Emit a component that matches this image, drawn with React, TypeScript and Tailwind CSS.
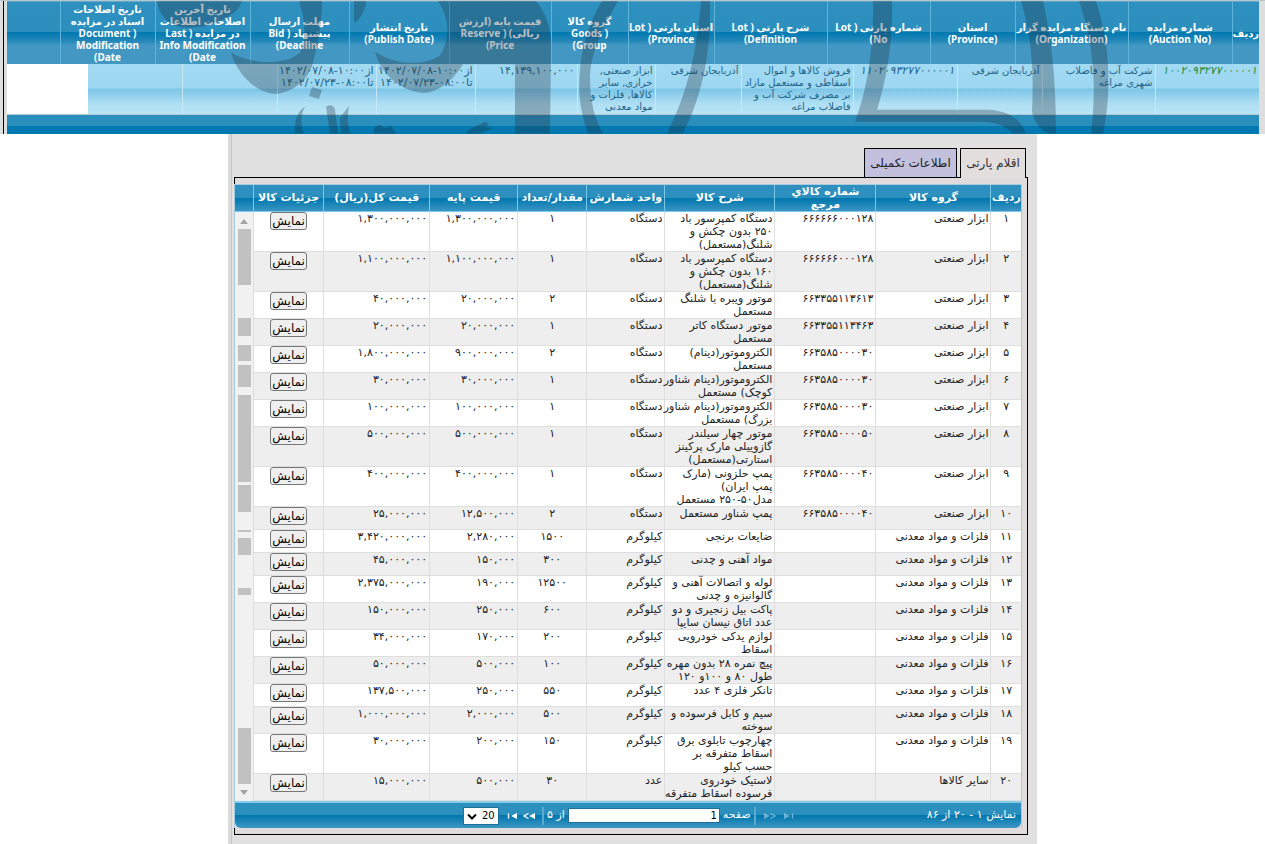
import React from "react";

type Lines = string[];

const auctionHeads: { w: string; lines: Lines }[] = [
  { w: "w-[27px]", lines: ["ردیف"] },
  { w: "w-[104px]", lines: ["شماره مزایده", "(Auction No)"] },
  { w: "w-[113px]", lines: ["نام دستگاه مزایده گزار", "(Organization)"] },
  { w: "w-[85px]", lines: ["استان", "(Province)"] },
  { w: "w-[103px]", lines: ["شماره پارتی ( Lot", "No)"] },
  { w: "w-[113px]", lines: ["شرح پارتی ( Lot", "Definition)"] },
  { w: "w-[86px]", lines: ["استان پارتی ( Lot", "Province)"] },
  { w: "w-[77px]", lines: ["گروه کالا", "( Goods", "Group)"] },
  { w: "w-[102px]", lines: ["قیمت پایه (ارزش", "ریالی) ( Reserve", "Price)"] },
  { w: "w-[100px]", lines: ["تاریخ انتشار", "(Publish Date)"] },
  { w: "w-[99px]", lines: ["مهلت ارسال", "پیشنهاد ( Bid", "Deadline)"] },
  { w: "w-[95px]", lines: ["تاریخ آخرین", "اصلاحات اطلاعات", "در مزایده ( Last", "Info Modification", "Date)"] },
  { w: "w-[95px]", lines: ["تاریخ اصلاحات", "اسناد در مزایده", "( Document", "Modification", "Date)"] },
  { w: "w-[53px]", lines: [] },
];

const dates: Lines = ["از۱۰:۰۰-۱۴۰۲/۰۷/۰۸", "تا۰۸:۰۰-۱۴۰۲/۰۷/۲۳"];

const auctionCells: { w: string; cls?: string; lines: Lines }[] = [
  { w: "w-[104px]", cls: "text-[11px] italic text-[#1c8a3c]", lines: ["۱۰۰۲۰۹۳۲۷۷۰۰۰۰۰۱"] },
  { w: "w-[113px]", lines: ["شرکت آب و فاضلاب", "شهری مراغه"] },
  { w: "w-[85px]", lines: ["آذربایجان شرقی"] },
  { w: "w-[104px]", cls: "text-[11px] italic", lines: ["۱۱۰۲۰۹۳۲۷۷۰۰۰۰۰۱"] },
  { w: "w-[112px]", lines: ["فروش کالاها و اموال", "اسقاطی و مستعمل مازاد", "بر مصرف شرکت آب و", "فاضلاب مراغه"] },
  { w: "w-[86px]", lines: ["آذربایجان شرقی"] },
  { w: "w-[78px]", lines: ["ابزار صنعتی,", "خرازی, سایر", "کالاها, فلزات و", "مواد معدنی"] },
  { w: "w-[102px]", cls: "text-[11px]", lines: ["۱۴,۱۳۹,۱۰۰,۰۰۰"] },
  { w: "w-[99px]", cls: "text-[11px]", lines: dates },
  { w: "w-[99px]", cls: "text-[11px]", lines: dates },
  { w: "w-[95px]", lines: [] },
  { w: "w-[94px]", lines: [] },
];

const itemHeads: { w: string; lines: Lines }[] = [
  { w: "w-[30px]", lines: ["ردیف"] },
  { w: "w-[115px]", lines: ["گروه کالا"] },
  { w: "w-[101px]", lines: ["شماره كالاي", "مرجع"] },
  { w: "w-[110px]", lines: ["شرح کالا"] },
  { w: "w-[78px]", lines: ["واحد شمارش"] },
  { w: "w-[69px]", lines: ["مقدار/تعداد"] },
  { w: "w-[88px]", lines: ["قیمت پایه"] },
  { w: "w-[106px]", lines: ["قیمت کل(ریال)"] },
  { w: "w-[70px]", lines: ["جزئیات کالا"] },
];

const tool = "ابزار صنعتی";
const metal = "فلزات و مواد معدنی";
const device = "دستگاه";
const kilo = "کیلوگرم";

type Item = [string, string, string, Lines, string, string, string, string];

const items: Item[] = [
  ["۱", tool, "۶۶۶۶۶۶۰۰۰۱۲۸", ["دستگاه کمپرسور باد", "۲۵۰ بدون چکش و", "شلنگ(مستعمل)"], device, "۱", "۱,۳۰۰,۰۰۰,۰۰۰", "۱,۳۰۰,۰۰۰,۰۰۰"],
  ["۲", tool, "۶۶۶۶۶۶۰۰۰۱۲۸", ["دستگاه کمپرسور باد", "۱۶۰ بدون چکش و", "شلنگ(مستعمل)"], device, "۱", "۱,۱۰۰,۰۰۰,۰۰۰", "۱,۱۰۰,۰۰۰,۰۰۰"],
  ["۳", tool, "۶۶۳۳۵۵۱۱۳۶۱۳", ["موتور ویبره با شلنگ", "مستعمل"], device, "۲", "۲۰,۰۰۰,۰۰۰", "۴۰,۰۰۰,۰۰۰"],
  ["۴", tool, "۶۶۳۳۵۵۱۱۳۴۶۳", ["موتور دستگاه کاتر", "مستعمل"], device, "۱", "۲۰,۰۰۰,۰۰۰", "۲۰,۰۰۰,۰۰۰"],
  ["۵", tool, "۶۶۳۵۸۵۰۰۰۰۳۰", ["الکتروموتور(دینام)", "مستعمل"], device, "۲", "۹۰۰,۰۰۰,۰۰۰", "۱,۸۰۰,۰۰۰,۰۰۰"],
  ["۶", tool, "۶۶۳۵۸۵۰۰۰۰۳۰", ["الکتروموتور(دینام شناور", "کوچک) مستعمل"], device, "۱", "۳۰,۰۰۰,۰۰۰", "۳۰,۰۰۰,۰۰۰"],
  ["۷", tool, "۶۶۳۵۸۵۰۰۰۰۳۰", ["الکتروموتور(دینام شناور", "بزرگ) مستعمل"], device, "۱", "۱۰۰,۰۰۰,۰۰۰", "۱۰۰,۰۰۰,۰۰۰"],
  ["۸", tool, "۶۶۳۵۸۵۰۰۰۰۵۰", ["موتور چهار سیلندر", "گازوییلی مارک پرکینز", "استارتی(مستعمل)"], device, "۱", "۵۰۰,۰۰۰,۰۰۰", "۵۰۰,۰۰۰,۰۰۰"],
  ["۹", tool, "۶۶۳۵۸۵۰۰۰۰۴۰", ["پمپ حلزونی (مارک", "پمپ ایران)", "مدل۵۰-۲۵۰ مستعمل"], device, "۱", "۴۰۰,۰۰۰,۰۰۰", "۴۰۰,۰۰۰,۰۰۰"],
  ["۱۰", tool, "۶۶۳۵۸۵۰۰۰۰۴۰", ["پمپ شناور مستعمل"], device, "۲", "۱۲,۵۰۰,۰۰۰", "۲۵,۰۰۰,۰۰۰"],
  ["۱۱", metal, "", ["ضایعات برنجی"], kilo, "۱۵۰۰", "۲,۲۸۰,۰۰۰", "۳,۴۲۰,۰۰۰,۰۰۰"],
  ["۱۲", metal, "", ["مواد آهنی و چدنی"], kilo, "۳۰۰", "۱۵۰,۰۰۰", "۴۵,۰۰۰,۰۰۰"],
  ["۱۳", metal, "", ["لوله و اتصالات آهنی و", "گالوانیزه و چدنی"], kilo, "۱۲۵۰۰", "۱۹۰,۰۰۰", "۲,۳۷۵,۰۰۰,۰۰۰"],
  ["۱۴", metal, "", ["پاکت بیل زنجیری و دو", "عدد اتاق نیسان سایپا"], kilo, "۶۰۰", "۲۵۰,۰۰۰", "۱۵۰,۰۰۰,۰۰۰"],
  ["۱۵", metal, "", ["لوازم یدکی خودرویی", "اسقاط"], kilo, "۲۰۰", "۱۷۰,۰۰۰", "۳۴,۰۰۰,۰۰۰"],
  ["۱۶", metal, "", ["پیچ نمره ۲۸ بدون مهره", "طول ۸۰ و ۱۰۰و ۱۲۰"], kilo, "۱۰۰", "۵۰۰,۰۰۰", "۵۰,۰۰۰,۰۰۰"],
  ["۱۷", metal, "", ["تانکر فلزی ۴ عدد"], kilo, "۵۵۰", "۲۵۰,۰۰۰", "۱۳۷,۵۰۰,۰۰۰"],
  ["۱۸", metal, "", ["سیم و کابل فرسوده و", "سوخته"], kilo, "۵۰۰", "۲,۰۰۰,۰۰۰", "۱,۰۰۰,۰۰۰,۰۰۰"],
  ["۱۹", metal, "", ["چهارچوب تابلوی برق", "اسقاط متفرقه بر", "حسب کیلو"], kilo, "۱۵۰", "۲۰۰,۰۰۰", "۳۰,۰۰۰,۰۰۰"],
  ["۲۰", "سایر کالاها", "", ["لاستیک خودروی", "فرسوده اسقاط متفرقه"], "عدد", "۳۰", "۵۰۰,۰۰۰", "۱۵,۰۰۰,۰۰۰"],
];

const scrollSegments = [
  "mt-[3px] h-14",
  "mt-[33px] h-[18px]",
  "mt-[9px] h-4",
  "mt-1 h-[22px]",
  "mt-2 h-[87px]",
  "mt-[3px] h-[27px]",
  "mt-[18px] h-0.5",
  "mt-1.5 h-[17px]",
  "mt-[33px] h-[7px]",
  "mt-[133px] h-14",
];

function Stack({ lines }: { lines: Lines }) {
  return (
    <>
      {lines.map((line, i) => (
        <span key={i} className="block whitespace-nowrap">
          {line}
        </span>
      ))}
    </>
  );
}

function Cols({ cols }: { cols: { w: string }[] }) {
  return (
    <colgroup>
      {cols.map((c, i) => (
        <col key={i} className={c.w} />
      ))}
    </colgroup>
  );
}

function Watermark() {
  return (
    <svg
      aria-hidden="true"
      viewBox="0 0 1265 134"
      preserveAspectRatio="none"
      className="pointer-events-none absolute inset-0 h-full w-full"
      fill="#20323c"
      fillOpacity="0.31"
    >
      <path d="M157 0C159 14 168 26 186 27C205 27 224 22 238 8L242 0Z" />
      <path d="M299 0C306 20 306 40 300 52C285 66 250 64 231 52C238 76 258 94 277 94C292 92 306 82 312 66C318 45 322 20 322 0Z" />
      <path d="M354 0H366C366 8 360 20 354 22Z" />
      <path d="M312 87L322 90L319 99L309 96Z" />
      <path d="M295 134C294 122 298 110 305 107C300 116 301 126 304 134Z" />
      <path d="M326 107C330 104 334 105 335 110L338 134H330Z" />
      <path d="M340 118L349 106C347 118 348 126 350 134H341Z" />
      <path d="M374 128L380 125L385 129L391 126L396 134H374Z" />
      <path d="M438 0H536C546 12 551 26 551 48L550 134H515V64H463C452 82 437 93 423 93C398 90 380 72 375 51C394 65 424 66 440 55C450 40 450 18 438 0Z" />
      <path d="M602 0H618C600 32 590 56 590 78C590 100 594 118 603 134H588C580 112 578 92 580 70C582 44 590 20 602 0Z" />
      <path d="M701 0H710C711 48 704 92 683 134H667C688 92 697 50 701 0Z" />
      <path d="M466 134C470 127 478 127 484 122L489 124L486 128L494 128C488 131 484 132 480 134Z" />
      <path d="M873 0H892C893 40 887 78 877 110H990C1012 112 1022 122 1026 134H1013C1006 126 996 122 980 122H855C868 88 874 44 873 0Z" />
      <path d="M1021 0H1043C1052 40 1056 82 1056 134H1048C1040 130 1034 122 1032 112C1034 74 1032 36 1021 0Z" />
      <path d="M1079 0H1096C1110 44 1112 92 1103 134H1091C1097 88 1094 44 1079 0Z" />
    </svg>
  );
}

function AuctionGrid() {
  return (
    <section className="relative flex border-t border-[#b9c6cc] bg-[#dedede]">
      <div className="mr-[3px] w-1 shrink-0 border-r border-black" />
      <div className="min-w-0 flex-1">
        <table dir="rtl" className="w-full table-fixed border-collapse border-t border-[#5ba9cf]">
          <Cols cols={auctionHeads} />
          <thead>
            <tr className="h-[62px] bg-[linear-gradient(#2f90bf_0,#2b8fbe_48%,#0079b0_49%,#2286b8_62%,#4398c3_70%,#4398c3_100%)] font-['Noto_Sans','DejaVu_Sans',sans-serif] text-[10px] leading-3 font-bold text-white">
              {auctionHeads.map((h, i) => (
                <th key={i} scope="col" className="border-l border-[#5fb4da] p-0 last:border-l-0">
                  <div className="flex flex-col items-center">
                    <Stack lines={h.lines} />
                  </div>
                </th>
              ))}
            </tr>
          </thead>
        </table>
        <div dir="rtl" className="flex bg-white">
          <div className="min-w-0 flex-[1171]">
            <table className="w-full table-fixed border-collapse">
              <Cols cols={auctionCells} />
              <tbody>
                <tr className="h-[50px] bg-[linear-gradient(#a3daf3_0,#9cd6f0_48%,#7bc5e7_50%,#b0dff4_80%,#b8e4f6_100%)] text-[10px] leading-3 text-[#1e6488]">
                  {auctionCells.map((c, i) => (
                    <td key={i} className={`border-l border-[#c5e9f8] px-0.5 pt-px pb-0 text-right align-top leading-3 last:border-l-0 ${c.cls ?? ""}`}>
                      <Stack lines={c.lines} />
                    </td>
                  ))}
                </tr>
              </tbody>
            </table>
          </div>
          <div className="flex-[81]" />
        </div>
        <div className="h-5 border-t border-[#b5c7d0] bg-[linear-gradient(#2b8fbe_0,#2b8fbe_58%,#0079b0_60%,#0079b0_100%)]" />
      </div>
      <div className="w-1.5 shrink-0" />
      <Watermark />
    </section>
  );
}

function PagerIcon({ end, flip, dim, label }: { end: boolean; flip: boolean; dim?: boolean; label: string }) {
  return (
    <button type="button" aria-label={label} className={dim ? "text-white/40" : "text-white"}>
      <svg width="12" height="8" viewBox="0 0 12 8" className={flip ? "-scale-x-100" : ""} fill="none" stroke="currentColor">
        <path d="M0 1V7L6 4Z" fill="currentColor" stroke="none" />
        {end ? <path d="M8.500 1.500V6.500" strokeWidth="1.400" /> : <path d="M6.500 1.500L11 4L6.500 6.500" strokeWidth="1.400" />}
      </svg>
    </button>
  );
}

function Pager() {
  return (
    <div
      dir="rtl"
      className="flex h-[27px] items-center rounded-b-md border-t-2 border-[#86cdec] bg-[linear-gradient(#2f90bf_0,#2b8fbe_48%,#0077ae_50%,#3f97c3_100%)] text-[11px] font-medium text-white"
    >
      <div className="flex-1 pr-[5px] whitespace-nowrap">نمایش ۱ - ۲۰ از ۸۶</div>
      <div className="flex shrink-0 items-center">
        <PagerIcon end flip={false} dim label="صفحه آخر" />
        <span className="w-2" />
        <PagerIcon end={false} flip={false} dim label="صفحه بعد" />
        <span className="mr-2 ml-[3px] h-[18px] w-0.5 bg-[#5aabd2]" />
        <label htmlFor="page">صفحه</label>
        <input id="page" defaultValue="1" className="mx-[3px] h-[15px] w-[152px] border border-[#1f6f99] bg-white px-0.5 text-right text-[10px] text-black" />
        <span>از ۵</span>
        <span className="mx-[3px] h-[18px] w-0.5 bg-[#5aabd2]" />
        <span className="w-1" />
        <PagerIcon end={false} flip label="صفحه قبل" />
        <span className="w-[6px]" />
        <PagerIcon end flip label="صفحه اول" />
        <span className="relative mr-1.5">
          <select aria-label="تعداد در صفحه" dir="ltr" className="block h-[18px] w-9 appearance-none border border-[#1f6f99] bg-white p-0 pl-[18px] text-[10px] text-black">
            <option>20</option>
          </select>
          <svg width="10" height="8" viewBox="0 0 10 8" className="pointer-events-none absolute top-[6px] left-1" fill="none" stroke="black" strokeWidth="2">
            <path d="M1 1.500L5 5.500L9 1.500" />
          </svg>
        </span>
      </div>
      <div className="w-[228px]" />
    </div>
  );
}

function ItemsGrid() {
  return (
    <div dir="rtl" className="-ml-px border border-b-0 border-[#a9cbe0]">
      <div className="flex bg-[linear-gradient(#2f90bf_0,#2b8fbe_48%,#0077ae_50%,#3f97c3_100%)]">
        <div className="min-w-0 flex-1">
          <table className="w-full table-fixed border-collapse">
            <Cols cols={itemHeads} />
            <thead>
              <tr className="h-[27px] text-[11px] leading-[13px] font-bold text-white">
                {itemHeads.map((h, i) => (
                  <th key={i} scope="col" className="border-b border-l border-[#77c9ee] p-0">
                    <div className="flex flex-col items-center">
                      <Stack lines={h.lines} />
                    </div>
                  </th>
                ))}
              </tr>
            </thead>
          </table>
        </div>
        <div className="w-[18px] shrink-0 border-b border-[#77c9ee]" />
      </div>
      <div className="flex bg-white">
        <div className="min-w-0 flex-1">
          <table className="w-full table-fixed border-collapse">
            <Cols cols={itemHeads} />
            <tbody className="text-[11px] leading-[13px] text-[#222]">
              {items.map(([no, group, code, desc, unit, qty, base, total]) => (
                <tr key={no} className="odd:bg-white even:bg-[#eee] [&>td]:border-b [&>td]:border-l [&>td]:border-[#dedede] [&>td]:px-0.5 [&>td]:py-0 [&>td]:align-top">
                  <td className="text-center">{no}</td>
                  <td>{group}</td>
                  <td>{code}</td>
                  <td>
                    <Stack lines={desc} />
                  </td>
                  <td>{unit}</td>
                  <td className="text-center">{qty}</td>
                  <td>{base}</td>
                  <td>{total}</td>
                  <td className="text-center">
                    <button type="button" className="mx-auto mb-1 block h-[18px] w-[37px] rounded-[3px] border border-[#767676] bg-[#efefef] text-[12px] leading-4 text-black">
                      نمایش
                    </button>
                  </td>
                </tr>
              ))}
            </tbody>
          </table>
        </div>
        <div className="flex w-[18px] shrink-0 flex-col items-center bg-[#f1f1f1]">
          <svg width="8" height="5" viewBox="0 0 8 5" className="mt-[7px] mb-[2px] shrink-0" fill="#a3a3a3">
            <path d="M0 5L4 0L8 5Z" />
          </svg>
          {scrollSegments.map((s, i) => (
            <div key={i} className={`w-[13px] shrink-0 bg-[#c1c1c1] ${s}`} />
          ))}
          <svg width="8" height="5" viewBox="0 0 8 5" className="mt-[6px] shrink-0" fill="#a3a3a3">
            <path d="M0 0L4 5L8 0Z" />
          </svg>
        </div>
      </div>
      <Pager />
    </div>
  );
}

export default function App() {
  return (
    <div className="min-h-screen overflow-hidden bg-white font-['DejaVu_Sans',sans-serif]">
      <AuctionGrid />
      <main className="mr-[228px] ml-[228px] border-l-[3px] border-[#dadada] bg-[#e1e1e1]">
        <div className="border-l border-[#c8c8c8] pt-3.5 pr-[9px] pb-2.5 pl-0.5">
          <div role="tablist" dir="rtl" className="flex items-end gap-[3px] pr-0.5">
            <button type="button" role="tab" aria-selected="true" className="z-10 -mb-px h-[30px] w-[66px] border border-b-0 border-black bg-[#e2dede] text-[12px] text-[#333]">
              اقلام پارتی
            </button>
            <button type="button" role="tab" aria-selected="false" className="h-[29px] w-[93px] border border-b-0 border-black bg-[#c3c0de] text-[12px] text-[#222]">
              اطلاعات تکمیلی
            </button>
          </div>
          <div className="border border-black bg-[#e0dbdd] pt-1.5 pr-[5px] pb-1.5">
            <ItemsGrid />
          </div>
        </div>
      </main>
    </div>
  );
}
